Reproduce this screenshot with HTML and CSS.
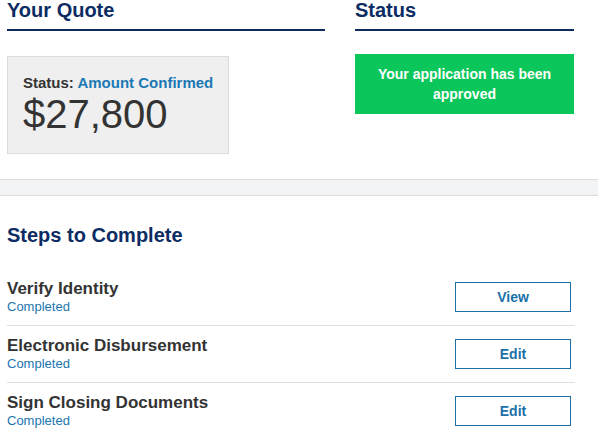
FILE: index.html
```html
<!DOCTYPE html>
<html lang="en">
<head>
<meta charset="utf-8">
<title>Quote</title>
<link rel="stylesheet" href="styles.css">
</head>
<body>
<div class="top">
  <section class="col col-quote">
    <h2 class="heading">Your Quote</h2>
    <div class="quote-box">
      <div class="quote-status">Status: <span class="accent">Amount Confirmed</span></div>
      <div class="quote-amount">$27,800</div>
    </div>
  </section>
  <section class="col col-status">
    <h2 class="heading">Status</h2>
    <div class="status-box">Your application has been<br>approved</div>
  </section>
</div>
<div class="band"></div>
<section class="steps">
  <h2 class="steps-title">Steps to Complete</h2>
  <div class="step">
    <div class="step-info">
      <div class="step-name">Verify Identity</div>
      <div class="step-state">Completed</div>
    </div>
    <button class="step-btn">View</button>
  </div>
  <div class="step">
    <div class="step-info">
      <div class="step-name">Electronic Disbursement</div>
      <div class="step-state">Completed</div>
    </div>
    <button class="step-btn">Edit</button>
  </div>
  <div class="step">
    <div class="step-info">
      <div class="step-name">Sign Closing Documents</div>
      <div class="step-state">Completed</div>
    </div>
    <button class="step-btn">Edit</button>
  </div>
</section>
</body>
</html>
```
FILE: styles.css
```css
* { box-sizing: border-box; }
html, body { margin: 0; padding: 0; background: #fff; }
body {
  font-family: "Liberation Sans", Arial, sans-serif;
  color: #333;
  overflow: hidden;
}
.top {
  display: flex;
  gap: 30px;
  padding-left: 7px;
}
.col-quote { width: 318px; }
.col-status { width: 219px; }
.heading {
  margin: 0;
  font-size: 20px;
  line-height: 20px;
  font-weight: bold;
  color: #0c2c63;
  padding-bottom: 9px;
  border-bottom: 2px solid #0c2a5a;
}
.quote-box {
  margin-top: 25px;
  width: 222px;
  height: 98px;
  background: #efefef;
  border: 1px solid #dcdcdc;
  padding: 18px 0 0 15px;
}
.quote-status {
  font-size: 15px;
  line-height: 16px;
  font-weight: bold;
  color: #333;
}
.accent { color: #1a79b4; }
.quote-amount {
  margin-top: 3px;
  font-size: 40px;
  line-height: 40px;
  color: #333;
}
.status-box {
  margin-top: 23px;
  height: 60px;
  padding: 10px 4px;
  background: #0bc65b;
  color: #fff;
  font-size: 14px;
  line-height: 20px;
  font-weight: bold;
  text-align: center;
}
.band {
  margin-top: 25px;
  height: 17px;
  background: #f2f3f4;
  border-top: 1px solid #dcdcdc;
  border-bottom: 1px solid #dcdcdc;
}
.steps {
  padding: 0 23px 0 7px;
}
.steps-title {
  margin: 29px 0 24px;
  font-size: 20px;
  line-height: 20px;
  font-weight: bold;
  color: #0c2c63;
}
.step {
  display: flex;
  align-items: center;
  justify-content: space-between;
  padding: 10px 4px 10px 0;
  border-bottom: 1px solid #dedede;
}
.step:last-child { border-bottom: none; }
.step-name {
  font-size: 17px;
  line-height: 20px;
  font-weight: bold;
  color: #333;
}
.step-state {
  font-size: 13px;
  line-height: 16px;
  color: #1a75b0;
}
.step-btn {
  width: 116px;
  height: 30px;
  margin: 0;
  padding: 0;
  background: #fff;
  border: 1px solid #1f6ea4;
  border-radius: 0;
  font-family: "Liberation Sans", Arial, sans-serif;
  font-size: 14px;
  font-weight: bold;
  color: #1a70a8;
}
```
